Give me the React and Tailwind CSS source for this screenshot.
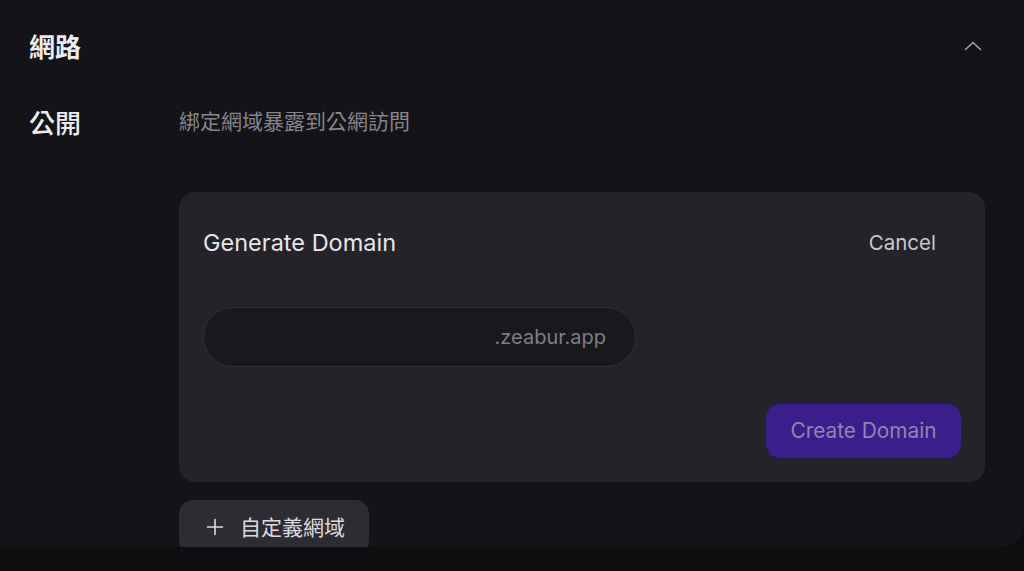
import React from "react";

const latin = { fontFamily: 'Inter, "Noto Sans CJK TC", sans-serif' };
const cjk = { fontFamily: '"Noto Sans CJK TC", "Noto Sans", sans-serif' };

function ChevronUp() {
  return (
    <svg width="24" height="24" viewBox="0 0 24 24" fill="none" stroke="currentColor" strokeWidth="1.6" strokeLinecap="round" strokeLinejoin="round">
      <path d="m19.5 15.5-7.5-7-7.5 7" />
    </svg>
  );
}

function PlusIcon() {
  return (
    <svg width="18" height="18" viewBox="0 0 18 18" fill="none" stroke="currentColor" strokeWidth="1.6" strokeLinecap="round">
      <path d="M9 1.5v15M1.5 9h15" />
    </svg>
  );
}

export default function App() {
  return (
    <div className="w-[1024px] h-[571px] bg-[#0e0e11] overflow-hidden">
      <div className="h-[547px] bg-[#141318] rounded-br-[22px] overflow-hidden pl-[29px] pt-[28px]">
        <div className="flex items-center justify-between h-[34px] pr-[39px]">
          <div className="text-[26px] font-semibold text-[#ececee]" style={cjk}>網路</div>
          <div className="text-[#a3a2a8] mt-[1px]"><ChevronUp /></div>
        </div>
        <div className="flex mt-[42px]">
          <div className="w-[150px] shrink-0 h-[34px] flex items-center text-[26px] font-medium text-[#ececee]" style={cjk}>公開</div>
          <div className="w-[806px]">
            <div className="h-[34px] flex items-center text-[21px] text-[#86858c]" style={cjk}>綁定網域暴露到公網訪問</div>
            <div className="mt-[54px] bg-[#242329] rounded-[16px] p-[24px]">
              <div className="flex items-center justify-between h-[54px]">
                <div className="text-[23.5px] text-[#e6e6e9]" style={latin}>Generate Domain</div>
                <div className="h-[54px] px-[25px] flex items-center text-[20.5px] text-[#c9c8cd]" style={latin}>Cancel</div>
              </div>
              <div className="mt-[37px] w-[433px] h-[60px] rounded-full bg-[#19181d] border border-[#2f2e34] flex items-center justify-end pr-[29px]">
                <span className="text-[20px] text-[#7f7e85]" style={latin}>.zeabur.app</span>
              </div>
              <div className="mt-[37px] flex justify-end">
                <div className="h-[54px] w-[195px] rounded-[14px] bg-[#3b1d8b] flex items-center justify-center text-[20.8px] text-[#8f86ad]" style={latin}>Create Domain</div>
              </div>
            </div>
            <div className="mt-[18px] w-[190px] h-[54px] rounded-[14px] bg-[#2d2c32] flex items-center pl-[27px] text-[#dcdce0]">
              <PlusIcon />
              <span className="ml-[16px] text-[21px]" style={cjk}>自定義網域</span>
            </div>
          </div>
        </div>
      </div>
    </div>
  );
}
